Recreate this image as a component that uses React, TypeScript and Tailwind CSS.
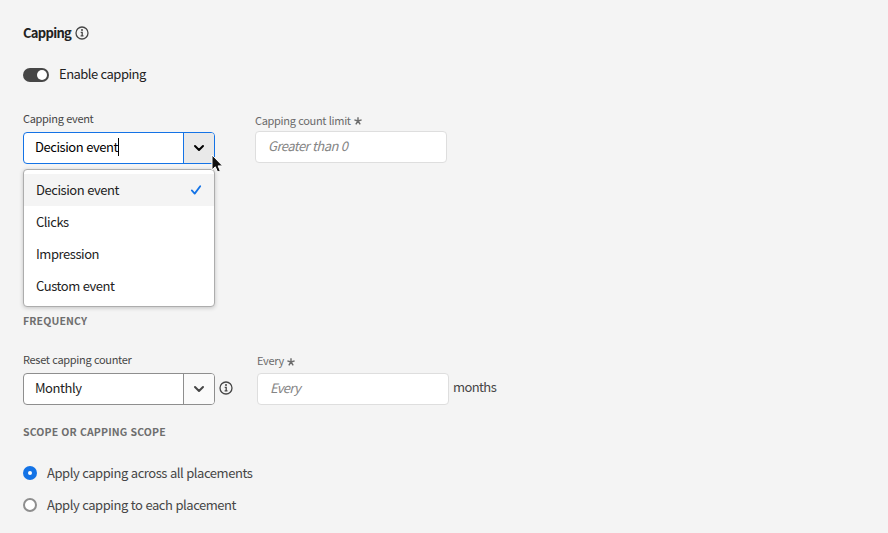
import React from "react";

function InfoIcon() {
  return (
    <svg width="14" height="14" viewBox="0 0 14 14" fill="none" className="shrink-0">
      <circle cx="7" cy="7" r="6" stroke="#464646" strokeWidth="1.3" />
      <circle cx="7" cy="4.1" r="1" fill="#464646" />
      <path d="M5.7 6.3H7.2V9.7M5.6 9.9H8.5" stroke="#464646" strokeWidth="1.3" />
    </svg>
  );
}

function Chevron({ color }: { color: string }) {
  return (
    <svg width="12" height="8" viewBox="0 0 12 8" fill="none">
      <path d="M2 2L6 6L10 2" stroke={color} strokeWidth="2" strokeLinecap="round" strokeLinejoin="round" />
    </svg>
  );
}

function Asterisk() {
  return (
    <svg width="8" height="8" viewBox="0 0 8 8" fill="none" className="mt-[3px] ml-[3px]">
      <path d="M4 4V0.2M4 4L0.4 2.9M4 4L7.6 2.9M4 4L1.8 7.3M4 4L6.2 7.3" stroke="#6a6a6a" strokeWidth="1.4" />
    </svg>
  );
}

function SectionTitle({ children }: { children: React.ReactNode }) {
  return <h3 className="text-[10.5px] leading-4 font-bold tracking-[0.15px] text-[#6e6e6e]">{children}</h3>;
}

const options = ["Decision event", "Clicks", "Impression", "Custom event"];

export default function App() {
  return (
    <main className="h-[533px] w-[888px] overflow-hidden bg-[#f4f4f4] pt-[25px] pl-[23px] font-['Noto_Sans_CJK_SC',sans-serif] text-[13px] leading-4 tracking-[-0.45px] text-[#222] [word-spacing:0.5px]">
      <div className="flex h-4 items-center gap-[3px]">
        <h2 className="w-[49px] font-bold tracking-[-0.7px] whitespace-nowrap">Capping</h2>
        <InfoIcon />
      </div>

      <div className="mt-[26px] flex h-4 items-center">
        <span className="flex h-[14px] w-[26px] items-center justify-end rounded-full bg-[#464646] p-[2px]">
          <span className="size-[10px] rounded-full bg-white" />
        </span>
        <span className="ml-[10px] pb-0.5 tracking-[-0.52px]">Enable capping</span>
      </div>

      <div className="mt-[27px] flex h-[54px] gap-10">
        <div className="w-48">
          <label className="block h-[22px] text-[11px] tracking-[-0.32px] text-[#464646]">Capping event</label>
          <div className="relative flex h-8 rounded border border-[#1473e6] bg-white">
            <div className="flex flex-1 items-center pb-0.5 pl-[11px] text-black">
              <span>Decision event</span>
              <span className="h-[18px] w-px bg-black" />
            </div>
            <div className="flex w-[31px] items-center justify-center rounded-r-[3px] border-l border-[#1473e6] bg-[#e9e9e9]">
              <Chevron color="#000" />
            </div>
            <ul className="absolute top-[36px] -left-px h-[138px] w-48 rounded border border-[#adadad] bg-white py-1 shadow-[0_1px_4px_rgba(0,0,0,0.2)]">
              {options.map((option, i) => (
                <li key={option} className={i === 0 ? "flex h-8 items-center justify-between bg-[#f4f4f4] px-3" : "flex h-8 items-center px-3"}>
                  {option}
                  {i === 0 && (
                    <svg width="12" height="12" viewBox="0 0 12 12" fill="none">
                      <path d="M1.8 6.4L4.7 9.6L10.2 2.2" stroke="#1473e6" strokeWidth="1.8" strokeLinecap="round" strokeLinejoin="round" />
                    </svg>
                  )}
                </li>
              ))}
            </ul>
            <svg className="absolute top-[21px] left-[186px]" width="15" height="20" viewBox="0 0 15 20">
              <path d="M2 1V15.8L5.3 12.8L7.6 18L10.3 16.9L8.1 11.9H12.6Z" fill="#111" stroke="white" strokeWidth="1" />
            </svg>
          </div>
        </div>
        <div className="w-48">
          <label className="flex h-[21px] items-center pb-0.5 text-[11px] tracking-[-0.32px] text-[#6a6a6a]">
            <span>Capping count limit</span>
            <Asterisk />
          </label>
          <div className="flex h-8 items-center rounded border border-[#dedede] bg-white px-3 pb-0.5 tracking-[-0.55px] text-[#858585] italic">Greater than 0</div>
        </div>
      </div>

      <div className="mt-[149px]">
        <SectionTitle>FREQUENCY</SectionTitle>
      </div>

      <div className="mt-[22px] flex h-[54px]">
        <div className="w-48">
          <label className="block h-[22px] text-[11px] tracking-[-0.32px] text-[#464646]">Reset capping counter</label>
          <div className="flex h-8 rounded border border-[#8e8e8e] bg-white">
            <div className="flex flex-1 items-center pb-0.5 pl-[11px] text-[#222]">Monthly</div>
            <div className="flex w-[31px] items-center justify-center rounded-r-[3px] border-l border-[#8e8e8e] bg-[#fafafa]">
              <Chevron color="#464646" />
            </div>
          </div>
        </div>
        <div className="mt-[21px] ml-1 flex h-8 items-center">
          <InfoIcon />
        </div>
        <div className="ml-6 w-48">
          <label className="flex h-[22px] items-center pb-1 text-[11px] tracking-[-0.3px] text-[#6a6a6a]">
            <span>Every</span>
            <Asterisk />
          </label>
          <div className="flex h-8 items-center rounded border border-[#dedede] bg-white px-3 pb-0.5 tracking-[-0.7px] text-[#858585] italic">Every</div>
        </div>
        <span className="mt-7 ml-1 tracking-[-0.6px] text-[#464646]">months</span>
      </div>

      <div className="mt-[19px]">
        <SectionTitle>SCOPE OR CAPPING SCOPE</SectionTitle>
      </div>

      <div className="mt-[17px] text-[#464646]">
        <div className="flex h-8 items-center gap-[10px]">
          <span className="flex size-[14px] items-center justify-center rounded-full bg-[#1473e6]">
            <span className="size-1 rounded-full bg-white" />
          </span>
          <span>Apply capping across all placements</span>
        </div>
        <div className="flex h-8 items-center gap-[10px]">
          <span className="size-[14px] rounded-full border-2 border-[#8e8e8e] bg-white" />
          <span>Apply capping to each placement</span>
        </div>
      </div>
    </main>
  );
}
